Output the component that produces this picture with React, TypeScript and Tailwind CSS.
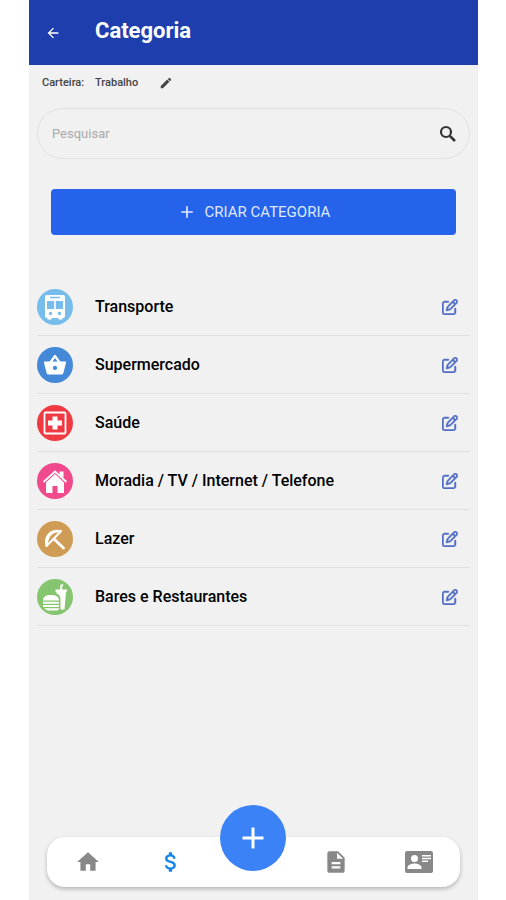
import type React from "react";
import { useState } from "react";
import {
  MdAdd,
  MdArrowBack,
  MdAttachMoney,
  MdDescription,
  MdEdit,
  MdHome,
} from "react-icons/md";
import { FaRegPenToSquare } from "react-icons/fa6";

const SearchIcon = () => (
  <svg
    viewBox="0 0 18 18"
    className="size-[18px]"
    fill="none"
    stroke="currentColor"
    strokeWidth="2.200"
  >
    <circle cx="7" cy="7" r="5" />
    <path d="M10.800 10.800L16 16" strokeWidth="2.600" />
  </svg>
);

const BusIcon = () => (
  <svg viewBox="0 0 36 36" className="size-full" fill="#fff">
    <path
      fillRule="evenodd"
      d="M10 6h16a2 2 0 0 1 2 2v19a2 2 0 0 1-2 2h-.5v1.500h-4V29h-7v1.500h-4V29H10a2 2 0 0 1-2-2V8a2 2 0 0 1 2-2zm3 1.800v1.500h10V7.800zM10 12v8h7.200v-8zm8.800 0v8H26v-8zm-5.300 10.800a1.700 1.700 0 1 0 0 3.400 1.700 1.700 0 0 0 0-3.400zm9 0a1.700 1.700 0 1 0 0 3.400 1.700 1.700 0 0 0 0-3.400z"
    />
  </svg>
);

const BasketIcon = () => (
  <svg viewBox="0 0 36 36" className="size-full" fill="#fff">
    <path
      d="M13 16l5-7 5 7"
      fill="none"
      stroke="#fff"
      strokeWidth="2.200"
      strokeLinejoin="round"
    />
    <path
      fillRule="evenodd"
      d="M8 14.500h20a1 1 0 0 1 1 1.300l-2.600 10.200a2 2 0 0 1-2 1.500H11.600a2 2 0 0 1-2-1.500L7 15.800a1 1 0 0 1 1-1.300zm10 4.300a2.100 2.100 0 1 0 0 4.200 2.100 2.100 0 0 0 0-4.200z"
    />
  </svg>
);

const HealthIcon = () => (
  <svg viewBox="0 0 36 36" className="size-full" fill="#fff">
    <rect
      x="7.500"
      y="7.500"
      width="21"
      height="21"
      rx="1"
      fill="none"
      stroke="#fff"
      strokeWidth="1.800"
    />
    <path d="M15.500 11.500h5v4H25v5h-4.500v4h-5v-4H11v-5h4.500z" />
  </svg>
);

const HouseIcon = () => (
  <svg viewBox="0 0 36 36" className="size-full" fill="#fff">
    <path
      d="M6.500 19L18 8.500 29.500 19"
      fill="none"
      stroke="#fff"
      strokeWidth="1.800"
    />
    <path d="M22.500 8.500h4v6.500l-4-3.500z" />
    <path d="M18 11l9 8.500V30h-6.500v-7h-5v7H9V19.500z" />
  </svg>
);

const UmbrellaIcon = () => (
  <svg
    viewBox="0 0 36 36"
    className="size-full"
    fill="none"
    stroke="#fff"
    strokeWidth="2"
    strokeLinejoin="round"
    strokeLinecap="round"
  >
    <path d="M9.500 25C7 15.500 13.500 8 24 10.200L9.500 25z" />
    <path d="M9.500 25C10 19.500 11.500 16 13.500 13.500M24 10.200C19.500 10 16 11 13.500 13.500" />
    <path d="M17 18l9.500 9" strokeWidth="2.800" />
  </svg>
);

const FastFoodIcon = () => (
  <svg viewBox="0 0 36 36" className="size-full" fill="#fff">
    <path d="M6 21.500c0-3.500 2.500-5.500 8-5.500s8 2 8 5.500z" />
    <path d="M6 22.800h16v2H6zM6 26.100h16v2H6zM7 29.300h15c0 1.400-.8 2.200-2 2.200h-9.500z" />
    <path d="M18.500 10.500h4.700V6l2.500-1 .7 1.500-1.200.6v3.400H30v2.200h-1l-1.500 17.800h-4V20c0-3-1.500-4.800-4-5.800l-.2-1.500h-.8z" />
  </svg>
);

const IdCardIcon = () => (
  <svg viewBox="0 0 28 22" className="h-[22px] w-7" fill="currentColor">
    <path
      fillRule="evenodd"
      d="M2 0h24a2 2 0 0 1 2 2v18a2 2 0 0 1-2 2H2a2 2 0 0 1-2-2V2a2 2 0 0 1 2-2zm7.500 4a3.500 3.500 0 1 0 0 7 3.500 3.500 0 0 0 0-7zM2.500 18h14v-1.500c0-2.600-4.500-4-7-4s-7 1.400-7 4zM17 4v1.500h9V4zm0 2.700v1.500h9V6.700zm0 2.700v1.500h6V9.400z"
    />
  </svg>
);

const categories = [
  { name: "Transporte", color: "bg-[#76bdeb]", icon: <BusIcon /> },
  { name: "Supermercado", color: "bg-[#4488d8]", icon: <BasketIcon /> },
  { name: "Saúde", color: "bg-[#f03a43]", icon: <HealthIcon /> },
  {
    name: "Moradia / TV / Internet / Telefone",
    color: "bg-[#f0498c]",
    icon: <HouseIcon />,
  },
  { name: "Lazer", color: "bg-[#cf9c55]", icon: <UmbrellaIcon /> },
  {
    name: "Bares e Restaurantes",
    color: "bg-[#86c56f]",
    icon: <FastFoodIcon />,
  },
];

const App: React.FC = () => {
  const [search, setSearch] = useState("");

  return (
    <div className="min-h-screen bg-white pl-[29px] pr-7 font-['Roboto',sans-serif]">
      <div className="flex min-h-screen flex-col bg-[#f1f1f1]">
        {/* Header */}
        <header className="flex h-[65px] items-center bg-[#1e3eae] pl-4 text-white">
          <button aria-label="Voltar" className="flex w-[50px]">
            <MdArrowBack className="size-4" />
          </button>
          <h1 className="pb-1 text-[22px] font-bold">Categoria</h1>
        </header>

        {/* Wallet */}
        <div className="flex h-9 items-center pl-[13px] text-[11px] font-medium text-[#444]">
          <span className="w-[53px]">Carteira:</span>
          <span className="w-16">Trabalho</span>
          <button aria-label="Editar carteira">
            <MdEdit className="size-3.5" />
          </button>
        </div>

        {/* Search */}
        <div className="mx-2 mt-[7px] flex h-[51px] items-center rounded-full border border-[#e0e0e0] pl-3.5 pr-3">
          <input
            type="text"
            aria-label="Pesquisar"
            placeholder="Pesquisar"
            value={search}
            onChange={(e) => setSearch(e.target.value)}
            className="min-w-0 flex-1 bg-transparent text-[13px] text-[#333] outline-none placeholder:text-[#a9a9a9]"
          />
          <button aria-label="Buscar" className="text-[#333]">
            <SearchIcon />
          </button>
        </div>

        <button className="mx-[22px] mt-[30px] flex h-[46px] items-center justify-center gap-2 rounded bg-[#2563eb] text-[15px] text-[#dfe8ff]">
          <MdAdd className="size-5" />
          CRIAR CATEGORIA
        </button>

        {/* Categories */}
        <ul className="mx-2 mt-[43px] flex-1">
          {categories.map((category) => (
            <li
              key={category.name}
              className="flex h-[58px] items-center border-b border-[#e0e0e0] pr-3"
            >
              <span
                className={`flex size-9 items-center justify-center rounded-full ${category.color}`}
              >
                {category.icon}
              </span>
              <span className="flex-1 pl-[22px] text-base font-medium text-black">
                {category.name}
              </span>
              <button
                aria-label={`Editar ${category.name}`}
                className="text-[#4f6cc4]"
              >
                <FaRegPenToSquare
                  className="size-4"
                  stroke="currentColor"
                  strokeWidth="14"
                />
              </button>
            </li>
          ))}
        </ul>

        {/* Bottom navigation */}
        <nav className="mx-[18px] mb-[13px] grid grid-cols-5 grid-rows-[50px] items-center justify-items-center rounded-[18px] bg-white text-[#888] shadow-[0_2px_4px_rgba(0,0,0,0.25)]">
          <a href="#" aria-label="Início">
            <MdHome className="size-[26px]" />
          </a>
          <a href="#" aria-label="Finanças" className="text-[#1485e8]">
            <MdAttachMoney className="size-[26px]" />
          </a>
          <button
            aria-label="Adicionar"
            className="mb-12 flex size-[66px] items-center justify-center rounded-full bg-[#3b82f6] text-white"
          >
            <MdAdd className="size-9" />
          </button>
          <a href="#" aria-label="Relatórios">
            <MdDescription className="size-[26px]" />
          </a>
          <a href="#" aria-label="Perfil">
            <IdCardIcon />
          </a>
        </nav>
      </div>
    </div>
  );
};

export default App;
